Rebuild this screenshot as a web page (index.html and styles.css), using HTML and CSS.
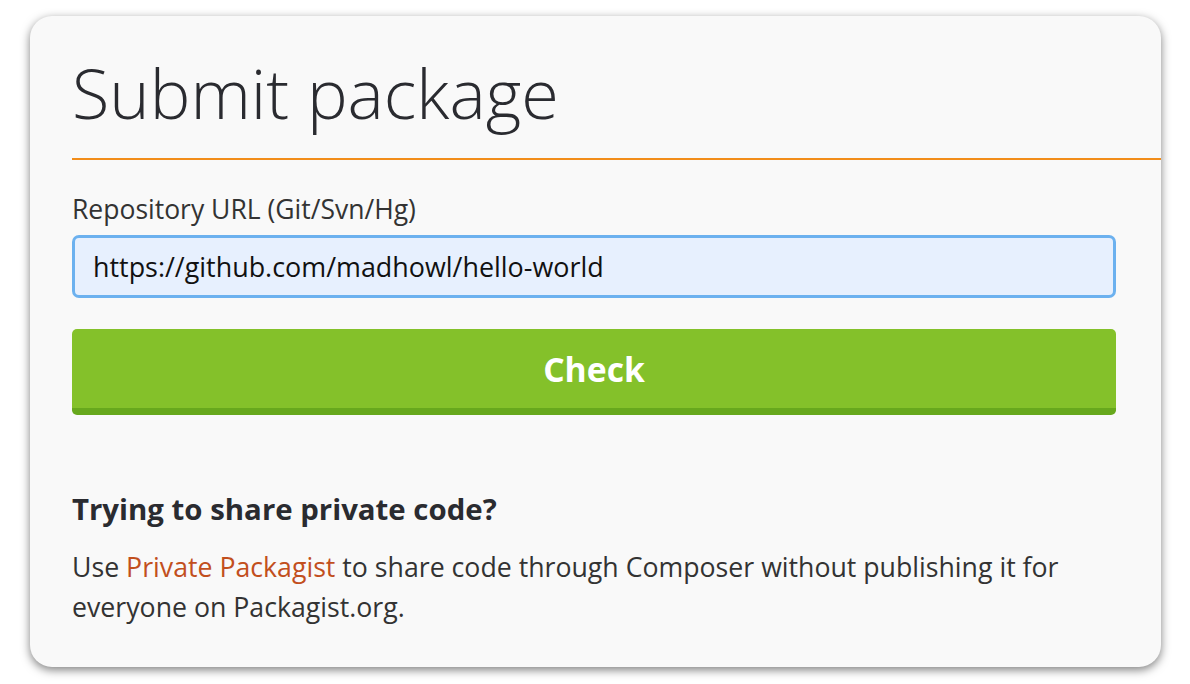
FILE: index.html
```html
<!DOCTYPE html>
<html>
<head>
<meta charset="utf-8">
<link rel="stylesheet" href="styles.css">
</head>
<body>
<div class="card">
  <h1 class="title">Submit package</h1>
  <div class="content">
    <label class="label">Repository URL (Git/Svn/Hg)</label>
    <div class="input">https://github.com/madhowl/hello-world</div>
    <button class="btn">Check</button>
    <h2 class="sub">Trying to share private code?</h2>
    <p class="text"><span>Use</span> <a class="link">Private Packagist</a> <span>to share code through Composer without publishing it for everyone on Packagist.org.</span></p>
  </div>
</div>
</body>
</html>
```
FILE: styles.css
```css
html, body { margin: 0; padding: 0; background: #fff; }
body {
  width: 1190px; height: 684px;
  padding: 16px 29px 17px 30px;
  box-sizing: border-box;
  font-family: "Open Sans", sans-serif;
}
.card {
  height: 100%;
  background: #f9f9f9;
  border-radius: 22px;
  box-shadow: 0 3px 10px rgba(0,0,0,0.5);
  overflow: hidden;
  box-sizing: border-box;
  padding-top: 34px;
}
.title {
  margin: 0 0 0 42px;
  padding-bottom: 22px;
  font-weight: 300;
  font-size: 68.4px;
  line-height: 86px;
  color: #2a2b30;
  border-bottom: 2px solid #f28d1a;
}
.content { padding: 34px 45px 0 42px; }
.label {
  display: block;
  font-size: 26.5px;
  line-height: 30px;
  color: #333;
  margin-bottom: 11px;
}
.input {
  height: 63px;
  box-sizing: border-box;
  border: 3px solid #6cb1ef;
  border-radius: 7px;
  background: #e7f0fe;
  padding: 0 18px;
  font-size: 26.9px;
  line-height: 58px;
  color: #111;
}
.btn {
  display: block;
  width: 100%;
  margin-top: 31px;
  height: 86px;
  border: none;
  border-bottom: 7px solid #67a81d;
  border-radius: 5px;
  background: #84c12a;
  color: #fff;
  font-family: "Open Sans", sans-serif;
  font-weight: 700;
  font-size: 33.7px;
  padding: 0;
}
.sub {
  margin: 76px 0 0;
  font-size: 29.4px;
  line-height: 36px;
  font-weight: 700;
  color: #2a2b30;
}
.text {
  margin: 20px 0 0;
  font-size: 26.7px;
  line-height: 40px;
  color: #333;
}
.link { color: #c24f1d; text-decoration: none; }
```
